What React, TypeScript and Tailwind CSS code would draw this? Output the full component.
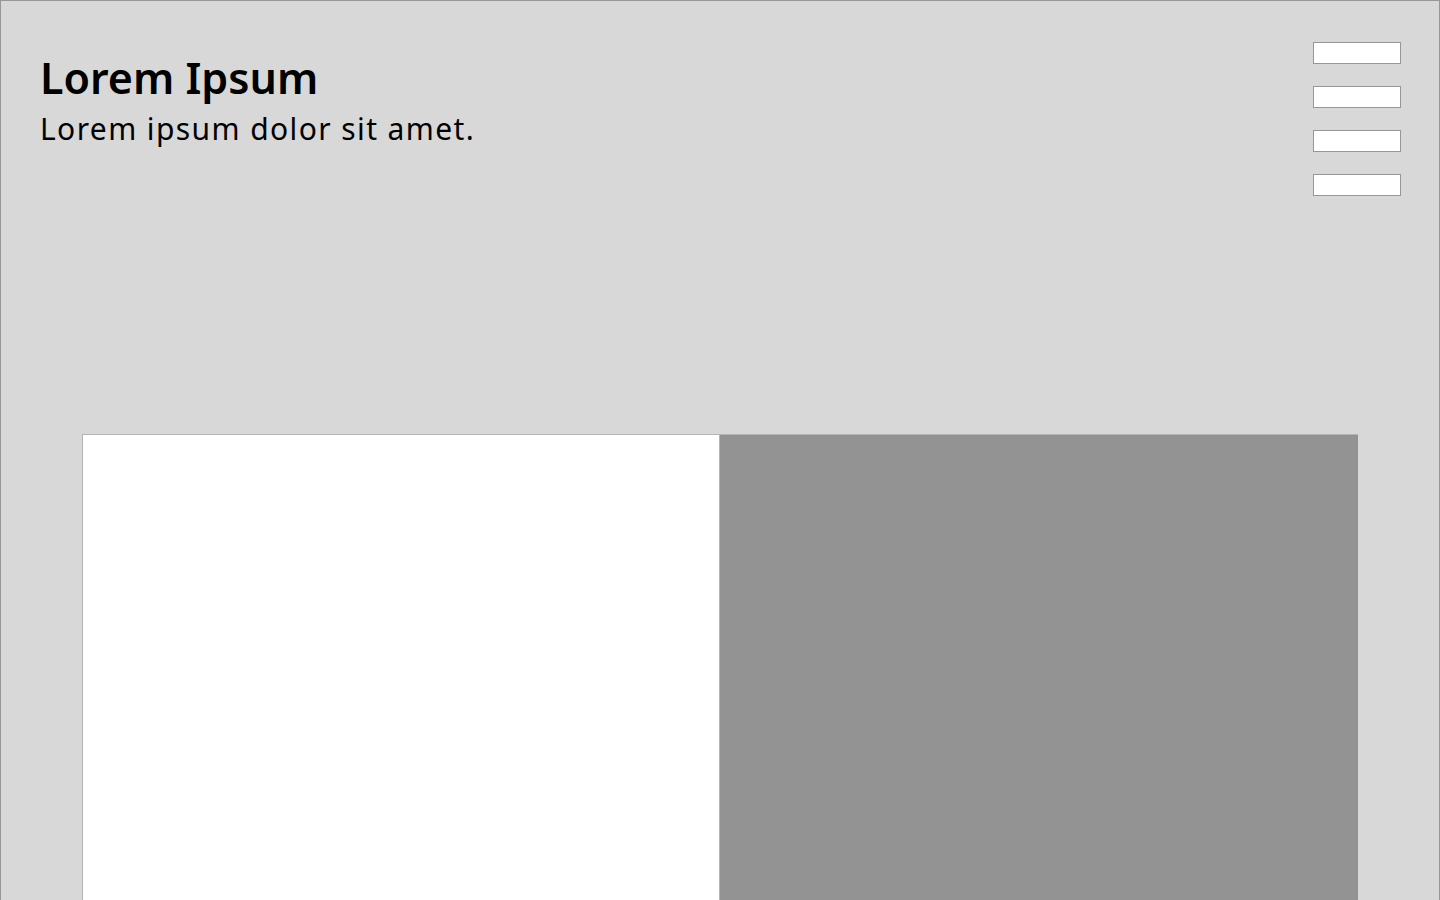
export default function App() {
  return (
    <div className="h-[900px] w-[1440px] overflow-hidden border-x border-t border-[#979797] bg-[#d8d8d8] font-['Noto_Sans',sans-serif] text-black">
      <header className="flex h-[433px] items-start justify-between pl-[39px] pr-[38px] pt-[41px]">
        <div className="pt-[9px]">
          <h1 className="text-[43px] font-semibold leading-[54px] tracking-[0px]">Lorem Ipsum</h1>
          <p className="text-[30px] font-normal leading-[47px] tracking-[1.4px]">Lorem ipsum dolor sit amet.</p>
        </div>
        <div className="flex flex-col gap-[22px]">
          <div className="h-[22px] w-[88px] border border-[#979797] bg-white" />
          <div className="h-[22px] w-[88px] border border-[#979797] bg-white" />
          <div className="h-[22px] w-[88px] border border-[#979797] bg-white" />
          <div className="h-[22px] w-[88px] border border-[#979797] bg-white" />
        </div>
      </header>

      <section className="mx-[81px] flex h-[466px] border-t border-[#b4b4b4]">
        <div className="w-[637px] border-l border-[#b4b4b4] bg-white" />
        <div className="flex-1 border-l border-[#b4b4b4] bg-[#939393]" />
      </section>
    </div>
  );
}
